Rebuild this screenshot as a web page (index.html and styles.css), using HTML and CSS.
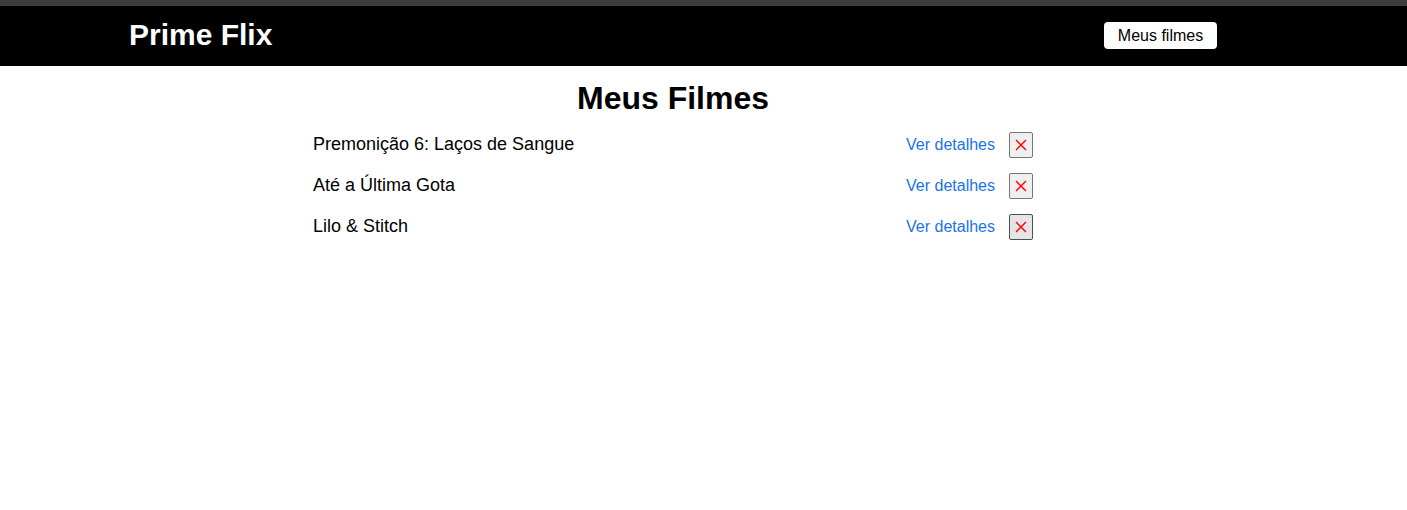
FILE: index.html
```html
<!DOCTYPE html>
<html lang="pt-BR">
<head>
<meta charset="utf-8">
<title>Prime Flix</title>
<link rel="stylesheet" href="styles.css">
</head>
<body>
<div class="topstrip"></div>
<header class="header">
  <a class="logo" href="#">Prime Flix</a>
  <a class="favoritos" href="#">Meus filmes</a>
</header>
<main class="meus-filmes">
  <h1 class="title">Meus Filmes</h1>
  <ul class="list">
    <li class="item">
      <span class="name">Premonição 6: Laços de Sangue</span>
      <div class="actions">
        <a class="details" href="#">Ver detalhes</a>
        <button class="remove"><svg width="12" height="12" viewBox="0 0 12 12"><path d="M1 1L11 11M11 1L1 11" stroke="#ff0000" stroke-width="1.4"/></svg></button>
      </div>
    </li>
    <li class="item">
      <span class="name">Até a Última Gota</span>
      <div class="actions">
        <a class="details" href="#">Ver detalhes</a>
        <button class="remove"><svg width="12" height="12" viewBox="0 0 12 12"><path d="M1 1L11 11M11 1L1 11" stroke="#ff0000" stroke-width="1.4"/></svg></button>
      </div>
    </li>
    <li class="item">
      <span class="name">Lilo &amp; Stitch</span>
      <div class="actions">
        <a class="details" href="#">Ver detalhes</a>
        <button class="remove hover"><svg width="12" height="12" viewBox="0 0 12 12"><path d="M1 1L11 11M11 1L1 11" stroke="#ff0000" stroke-width="1.4"/></svg></button>
      </div>
    </li>
  </ul>
</main>
</body>
</html>
```
FILE: styles.css
```css
* { box-sizing: border-box; }
body {
  margin: 0;
  font-family: "Liberation Sans", Arial, sans-serif;
  background: #fff;
}
.topstrip {
  height: 6px;
  background: #3c3c3c;
}
.header {
  height: 60px;
  background: #000;
  display: flex;
  align-items: center;
  justify-content: space-between;
  padding: 0 190px 0 129px;
}
.logo {
  color: #fff;
  font-size: 30px;
  font-weight: bold;
  text-decoration: none;
  margin-top: -2px;
}
.favoritos {
  background: #fff;
  color: #000;
  font-size: 16px;
  text-decoration: none;
  border-radius: 4px;
  width: 113px;
  height: 27px;
  display: flex;
  align-items: center;
  justify-content: center;
  margin-top: -1px;
}
.meus-filmes {
  width: 720px;
  margin-left: 313px;
}
.title {
  margin: 14px 0 0;
  font-size: 32px;
  font-weight: bold;
  text-align: center;
  line-height: 37px;
}
.list {
  list-style: none;
  margin: 7px 0 0;
  padding: 0;
}
.item {
  display: flex;
  align-items: center;
  justify-content: space-between;
  height: 41px;
}
.name {
  font-size: 18px;
}
.actions {
  display: flex;
  align-items: center;
  gap: 14px;
}
.details {
  color: #1a73e8;
  text-decoration: none;
  font-size: 16px;
}
.remove {
  width: 24px;
  height: 26px;
  padding: 0;
  display: flex;
  align-items: center;
  justify-content: center;
  background: #efefef;
  border: 1px solid #767676;
  border-radius: 2px;
}
.remove.hover {
  background: #e5e5e5;
  border-color: #4f4f4f;
}
```
